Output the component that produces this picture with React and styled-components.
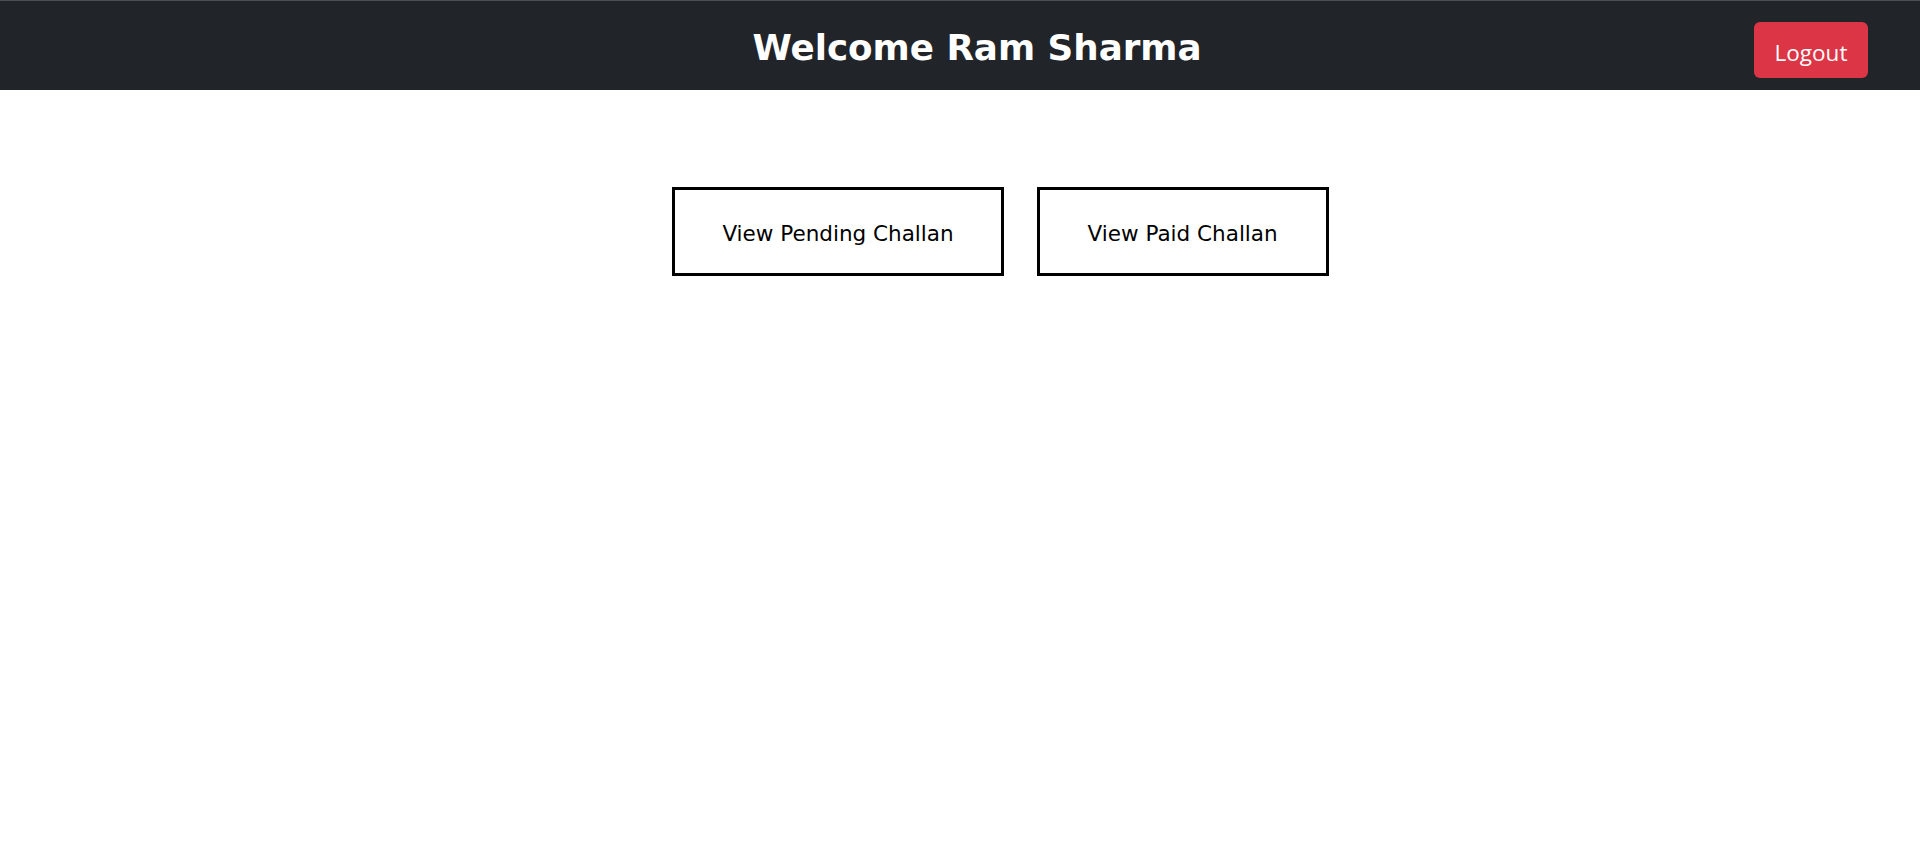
import React from 'react';
import styled, { createGlobalStyle } from 'styled-components';

const GlobalStyle = createGlobalStyle`
  body {
    margin: 0;
    background-color: #ffffff;
  }
`;

const Page = styled.div`
  min-height: 100vh;
`;

const Header = styled.header`
  background-color: #212529;
  border-top: 1px solid #4b4e53;
  height: 89px;
  display: flex;
  align-items: center;
  padding: 0 52px 0 200px;
`;

const Title = styled.h1`
  flex: 1;
  margin: 0;
  padding-top: 4px;
  text-align: center;
  color: #ffffff;
  font-family: "DejaVu Sans", Verdana, sans-serif;
  font-weight: bold;
  font-size: 35.7px;
`;

const LogoutButton = styled.button`
  width: 114px;
  height: 56px;
  margin-top: 9px;
  padding: 4px 0 0;
  border: none;
  border-radius: 6px;
  background-color: #dc3545;
  color: #ffffff;
  font-family: "Open Sans", "Noto Sans", sans-serif;
  font-size: 22.5px;
  cursor: pointer;
`;

const Actions = styled.div`
  display: flex;
  justify-content: center;
  gap: 33px;
  margin-top: 97px;
  padding-left: 81px;
`;

const ActionButton = styled.button`
  height: 89px;
  padding: 3px ${(p) => p.$pad}px 0;
  background-color: #ffffff;
  border: 3px solid #000000;
  color: #000000;
  font-family: "DejaVu Sans", Verdana, sans-serif;
  font-size: 21.5px;
  cursor: pointer;
`;

export default function App() {
  return (
    <Page>
      <GlobalStyle />
      <Header>
        <Title>Welcome Ram Sharma</Title>
        <LogoutButton>Logout</LogoutButton>
      </Header>
      <Actions>
        <ActionButton $pad={47}>View Pending Challan</ActionButton>
        <ActionButton $pad={48}>View Paid Challan</ActionButton>
      </Actions>
    </Page>
  );
}
